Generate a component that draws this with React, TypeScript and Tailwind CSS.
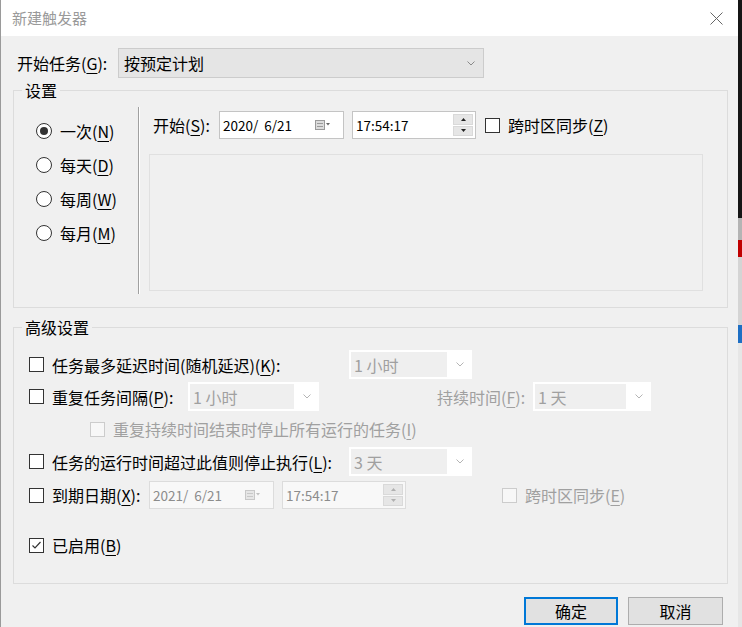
import clsx from "clsx";

function Key({ c }: { c: string }) {
  return <span className="underline underline-offset-[3px]">{c}</span>;
}

function Chevron({ color = "#8a8a8a" }: { color?: string }) {
  return (
    <svg width="8" height="5" viewBox="0 0 8 5">
      <polyline points="0.5,0.5 4,4 7.5,0.5" fill="none" stroke={color} strokeWidth="1" />
    </svg>
  );
}

function Checkbox({ checked, disabled }: { checked?: boolean; disabled?: boolean }) {
  return (
    <span
      className={clsx(
        "flex h-[15px] w-[15px] shrink-0 items-center justify-center border",
        disabled ? "border-[#cccccc] bg-[#f7f7f7]" : "border-[#333333] bg-white"
      )}
    >
      {checked && (
        <svg width="13" height="13" viewBox="0 0 13 13">
          <polyline points="2.5,6.5 5,9 10.5,3" fill="none" stroke="#333333" strokeWidth="1.2" />
        </svg>
      )}
    </span>
  );
}

function Radio({ checked }: { checked?: boolean }) {
  return (
    <span className="flex h-[16px] w-[16px] shrink-0 items-center justify-center rounded-full border border-[#333333] bg-white">
      {checked && <span className="h-[8px] w-[8px] rounded-full bg-[#333333]" />}
    </span>
  );
}

function CalendarIcon({ disabled }: { disabled?: boolean }) {
  const c = disabled ? "#c8c8c8" : "#9a9a9a";
  return (
    <svg width="16" height="10" viewBox="0 0 16 10">
      <rect x="0.5" y="0.5" width="9" height="9" fill={disabled ? "#e6e6e6" : "#dcdcdc"} stroke={c} />
      <line x1="2" y1="3.5" x2="8" y2="3.5" stroke={c} />
      <line x1="2" y1="6.5" x2="8" y2="6.5" stroke={c} />
      <polygon points="11,3 15,3 13,5.5" fill={disabled ? "#c0c0c0" : "#666666"} />
    </svg>
  );
}

function Spin({ disabled }: { disabled?: boolean }) {
  const fill = disabled ? "#b0b0b0" : "#222222";
  return (
    <div className="flex w-[20px] flex-col gap-[1px] self-stretch py-[2px]">
      <div className="flex flex-1 items-center justify-center border border-[#d9d9d9] bg-[#e6e6e6]">
        <svg width="5" height="3" viewBox="0 0 5 3">
          <polygon points="0,3 5,3 2.5,0" fill={fill} />
        </svg>
      </div>
      <div className="flex flex-1 items-center justify-center border border-[#d9d9d9] bg-[#e6e6e6]">
        <svg width="5" height="3" viewBox="0 0 5 3">
          <polygon points="0,0 5,0 2.5,3" fill={fill} />
        </svg>
      </div>
    </div>
  );
}

function DisabledCombo({ text, className }: { text: string; className: string }) {
  return (
    <div className={clsx("flex h-[29px] shrink-0 bg-white py-[2px] pl-[2px]", className)}>
      <div className="flex flex-1 items-center bg-[#efefef] pl-[3px] text-[#a0a0a0]">{text}</div>
      <div className="flex w-[25px] items-center justify-center">
        <Chevron color="#b4b4b4" />
      </div>
    </div>
  );
}

export default function App() {
  return (
    <div className="flex h-[627px] w-[742px] overflow-hidden font-['Noto_Sans_CJK_SC','Noto_Sans',sans-serif] text-[16px] leading-[20px] text-black">
      {/* 对话框 */}
      <div className="flex w-[738px] flex-col border-l border-[#9a9a9a]">
        {/* 标题栏 */}
        <div className="flex h-[36px] shrink-0 items-center justify-between bg-white pl-[11px] pr-[15px]">
          <span className="text-[15px] text-[#9a9a9a]">新建触发器</span>
          <svg width="13" height="13" viewBox="0 0 13 13">
            <line x1="0.5" y1="0.5" x2="12.5" y2="12.5" stroke="#666666" strokeWidth="1" />
            <line x1="12.5" y1="0.5" x2="0.5" y2="12.5" stroke="#666666" strokeWidth="1" />
          </svg>
        </div>

        <div className="flex flex-1 flex-col bg-[#f0f0f0] pl-[12px] pr-[10px]">
          {/* 开始任务 */}
          <div className="mt-[12px] flex h-[30px] items-center">
            <span className="ml-[4px] w-[101px]">
              开始任务(<Key c="G" />):
            </span>
            <div className="flex h-[30px] w-[366px] items-center justify-between border border-[#cccccc] bg-[#e5e5e5] pl-[5px] pr-[8px]">
              <span>按预定计划</span>
              <Chevron />
            </div>
          </div>

          {/* 设置 */}
          <fieldset className="mt-[2px] w-[715px] border border-[#dcdcdc]">
            <legend className="ml-[8px] px-[3px]">设置</legend>
            <div className="flex pb-[13px] pt-[7px]">
              <div className="flex w-[124px] flex-col gap-[14px] pl-[22px] pt-[14px]">
                <label className="flex h-[20px] items-center gap-[8px]">
                  <Radio checked />
                  <span>
                    一次(<Key c="N" />)
                  </span>
                </label>
                <label className="flex h-[20px] items-center gap-[8px]">
                  <Radio />
                  <span>
                    每天(<Key c="D" />)
                  </span>
                </label>
                <label className="flex h-[20px] items-center gap-[8px]">
                  <Radio />
                  <span>
                    每周(<Key c="W" />)
                  </span>
                </label>
                <label className="flex h-[20px] items-center gap-[8px]">
                  <Radio />
                  <span>
                    每月(<Key c="M" />)
                  </span>
                </label>
              </div>

              <div className="h-[187px] w-[2px] border-l border-[#a0a0a0] bg-white" />

              <div className="flex flex-col pt-[4px]">
                <div className="ml-[13px] flex h-[28px] items-center">
                  <span className="w-[66px]">
                    开始(<Key c="S" />):
                  </span>
                  <div className="flex h-[28px] w-[125px] items-center justify-between border border-[#c4c4c4] bg-white pl-[3px] pr-[12px] text-[13.5px]">
                    <span className="whitespace-pre">2020/  6/21</span>
                    <CalendarIcon />
                  </div>
                  <div className="ml-[8px] flex h-[28px] w-[124px] items-center justify-between border border-[#c4c4c4] bg-white pl-[3px] pr-[2px] text-[13.5px]">
                    <span>17:54:17</span>
                    <Spin />
                  </div>
                  <span className="ml-[9px]">
                    <Checkbox />
                  </span>
                  <span className="ml-[8px]">
                    跨时区同步(<Key c="Z" />)
                  </span>
                </div>
                <div className="ml-[9px] mt-[15px] h-[137px] w-[554px] border border-[#e0e0e0]" />
              </div>
            </div>
          </fieldset>

          {/* 高级设置 */}
          <fieldset className="mt-[9px] w-[715px] border border-[#dcdcdc]">
            <legend className="ml-[8px] px-[3px]">高级设置</legend>
            <div className="flex flex-col pb-[28px] pl-[15px] pt-[13px]">
              <div className="flex h-[29px] items-center">
                <Checkbox />
                <span className="ml-[8px] w-[297px]">
                  任务最多延迟时间(随机延迟)(<Key c="K" />):
                </span>
                <DisabledCombo text="1 小时" className="w-[123px]" />
              </div>

              <div className="mt-[3px] flex h-[29px] items-center">
                <Checkbox />
                <span className="ml-[8px] w-[136px]">
                  重复任务间隔(<Key c="P" />):
                </span>
                <DisabledCombo text="1 小时" className="w-[131px]" />
                <span className="ml-[118px] w-[96px] text-[#a0a0a0]">
                  持续时间(<Key c="F" />):
                </span>
                <DisabledCombo text="1 天" className="w-[118px]" />
              </div>

              <div className="flex h-[36px] items-center pl-[61px]">
                <Checkbox disabled />
                <span className="ml-[8px] text-[#a0a0a0]">
                  重复持续时间结束时停止所有运行的任务(<Key c="I" />)
                </span>
              </div>

              <div className="flex h-[29px] items-center">
                <Checkbox />
                <span className="ml-[8px] w-[297px]">
                  任务的运行时间超过此值则停止执行(<Key c="L" />):
                </span>
                <DisabledCombo text="3 天" className="w-[123px]" />
              </div>

              <div className="mt-[5px] flex h-[28px] items-center">
                <Checkbox />
                <span className="ml-[8px] w-[97px]">
                  到期日期(<Key c="X" />):
                </span>
                <div className="flex h-[28px] w-[125px] items-center justify-between border border-[#dcdcdc] bg-[#f8f8f8] pl-[3px] pr-[12px] text-[13.5px] text-[#8c8c8c]">
                  <span className="whitespace-pre">2021/  6/21</span>
                  <CalendarIcon disabled />
                </div>
                <div className="ml-[8px] flex h-[28px] w-[124px] items-center justify-between border border-[#dcdcdc] bg-[#f8f8f8] pl-[3px] pr-[2px] text-[13.5px] text-[#8c8c8c]">
                  <span>17:54:17</span>
                  <Spin disabled />
                </div>
                <span className="ml-[96px]">
                  <Checkbox disabled />
                </span>
                <span className="ml-[8px] text-[#a0a0a0]">
                  跨时区同步(<Key c="E" />)
                </span>
              </div>

              <div className="mt-[26px] flex h-[20px] items-center">
                <Checkbox checked />
                <span className="ml-[8px]">
                  已启用(<Key c="B" />)
                </span>
              </div>
            </div>
          </fieldset>

          {/* 按钮 */}
          <div className="mt-[13px] flex w-[715px] justify-end gap-[10px] pr-[5px]">
            <button className="h-[28px] w-[94px] border-2 border-[#0078d7] bg-[#e1e1e1]">确定</button>
            <button className="h-[28px] w-[95px] border border-[#adadad] bg-[#e1e1e1]">取消</button>
          </div>
        </div>
      </div>

      {/* 右侧背景窗口的边缘 */}
      <div className="flex w-[4px] flex-col">
        <div className="h-[218px] bg-[#151515]" />
        <div className="h-[22px] bg-[#b4b4b4]" />
        <div className="h-[17px] bg-[#c00000]" />
        <div className="h-[68px] bg-[#d4d4d4]" />
        <div className="h-[18px] bg-[#1e6fc4]" />
        <div className="flex-1 bg-[#e6e6e6]" />
      </div>
    </div>
  );
}
